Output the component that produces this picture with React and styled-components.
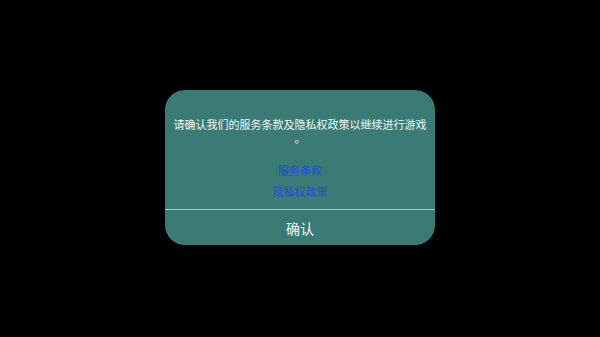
import React from "react";
import styled, { createGlobalStyle } from "styled-components";

const Global = createGlobalStyle`
  html, body { margin: 0; padding: 0; background: #000; }
  body { width: 600px; height: 337px; overflow: hidden; font-family: "Noto Sans CJK SC", "Noto Sans", sans-serif; }
`;

const Screen = styled.div`
  width: 600px;
  height: 337px;
  background: #000;
  display: flex;
  align-items: flex-start;
  justify-content: center;
  padding-top: 90px;
  box-sizing: border-box;
`;

const Dialog = styled.div`
  width: 270px;
  height: 155px;
  background: #3a7c75;
  border-radius: 20px;
  display: flex;
  flex-direction: column;
  box-sizing: border-box;
  padding-top: 27px;
  overflow: hidden;
`;

const Message = styled.p`
  margin: 0;
  padding: 0 8px;
  color: #f2f6f5;
  font-size: 11px;
  line-height: 14px;
  text-align: center;
  line-break: anywhere;
`;

const Links = styled.div`
  display: flex;
  flex-direction: column;
  align-items: center;
  margin-top: 15px;
`;

const LinkText = styled.a`
  color: #2454cc;
  font-size: 11px;
  font-weight: 500;
  line-height: 21px;
  text-decoration: none;
`;

const Divider = styled.div`
  height: 1px;
  background: #a9cbc6;
  margin-top: 7px;
`;

const Confirm = styled.button`
  flex: 1;
  border: none;
  background: transparent;
  color: #f4f7f6;
  font-family: inherit;
  font-size: 14px;
  padding: 0;
  display: flex;
  align-items: center;
  justify-content: center;
`;

export default function App() {
  return (
    <>
      <Global />
      <Screen>
        <Dialog>
          <Message>请确认我们的服务条款及隐私权政策以继续进行游戏。</Message>
          <Links>
            <LinkText>服务条款</LinkText>
            <LinkText>隐私权政策</LinkText>
          </Links>
          <Divider />
          <Confirm>确认</Confirm>
        </Dialog>
      </Screen>
    </>
  );
}
